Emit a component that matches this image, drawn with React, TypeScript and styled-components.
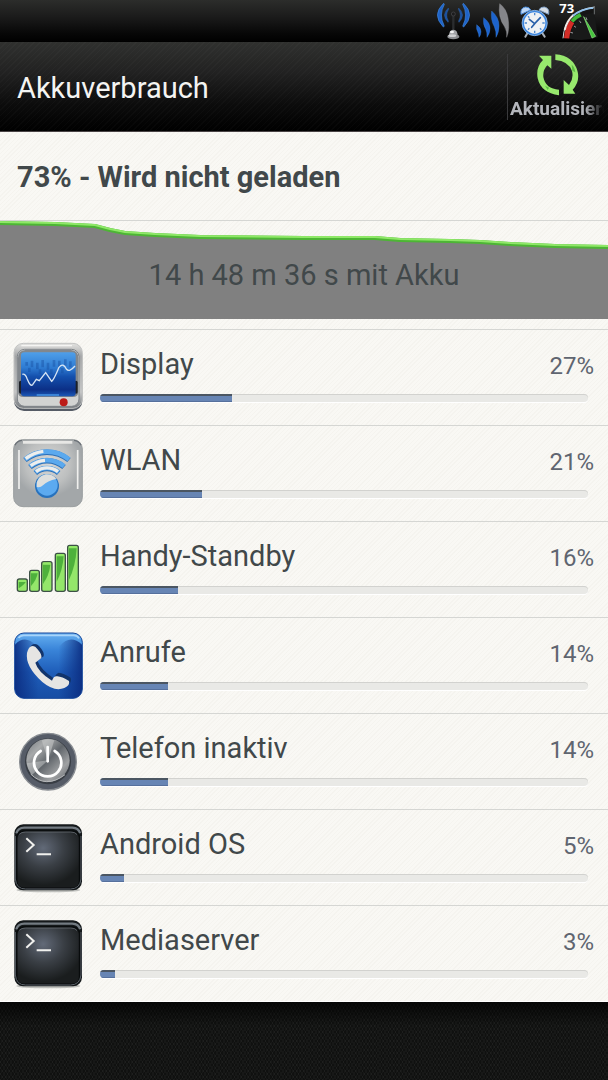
import React from "react";
import styled, { createGlobalStyle } from "styled-components";

const GlobalStyle = createGlobalStyle`
  *, *::before, *::after { box-sizing: border-box; }
  body {
    margin: 0;
    background: #0f0f0f;
    font-family: Roboto, "Liberation Sans", sans-serif;
  }
`;

const Screen = styled.div`
  display: flex;
  flex-direction: column;
  min-height: 100vh;
`;

const StatusBar = styled.div`
  display: flex;
  justify-content: flex-end;
  gap: 6px;
  height: 42px;
  padding-right: 9px;
  background: linear-gradient(#2c2d2b, #1b1b1b 40%, #070707 80%, #000);
`;

const StatusIcon = styled.svg`
  display: block;
  height: 42px;
`;

const Header = styled.header`
  display: flex;
  align-items: center;
  justify-content: space-between;
  height: 90px;
  padding-left: 17px;
  border-bottom: 1px solid #4a4446;
  background:
    repeating-linear-gradient(135deg, rgba(255, 255, 255, 0.02) 0 1px, transparent 1px 4px),
    linear-gradient(#30312f, #212121 35%, #0c0c0c 70%, #000);
`;

const Title = styled.h1`
  margin: 0;
  padding-top: 2px;
  font-size: 29px;
  line-height: 34px;
  font-weight: 400;
  color: #f4f4f2;
`;

const RefreshButton = styled.button`
  display: flex;
  flex-direction: column;
  align-items: center;
  justify-content: center;
  gap: 2px;
  width: 101px;
  height: 66px;
  margin: 0;
  padding: 0 2px;
  border: 0;
  border-left: 1px solid #3a3a3c;
  background: none;
  font-family: inherit;
  cursor: pointer;
`;

const RefreshIcon = styled.svg`
  flex: none;
  width: 42px;
  height: 42px;
`;

const RefreshLabel = styled.span`
  width: 100%;
  overflow: hidden;
  font-size: 19px;
  line-height: 22px;
  font-weight: 700;
  text-align: left;
  white-space: nowrap;
  color: #b4b6bc;
  mask-image: linear-gradient(90deg, #000 78%, transparent 98%);
`;

const Content = styled.main`
  border-bottom: 1px solid #ffffff;
  background:
    repeating-linear-gradient(135deg, rgba(120, 110, 80, 0.03) 0 1px, transparent 1px 3px),
    #f9f8f4;
`;

const Summary = styled.h2`
  display: flex;
  align-items: center;
  height: 88px;
  margin: 0;
  padding: 2px 0 0 17px;
  font-size: 29px;
  line-height: 34px;
  font-weight: 700;
  color: #41484a;
`;

const Chart = styled.section`
  display: grid;
  height: 99px;
  margin-bottom: 10px;
  border-top: 1px solid #d5d6d3;
`;

const ChartGraph = styled.svg`
  grid-area: 1 / 1;
  display: block;
  width: 100%;
  height: 98px;
  overflow: visible;
`;

const ChartLabel = styled.p`
  grid-area: 1 / 1;
  z-index: 1;
  align-self: center;
  margin: 0;
  padding-top: 10px;
  font-size: 29px;
  line-height: 34px;
  text-align: center;
  color: #41484a;
`;

const UsageList = styled.ul`
  margin: 0;
  padding: 0;
  list-style: none;
`;

const UsageRow = styled.li`
  display: grid;
  grid-template-columns: 72px 1fr;
  column-gap: 16px;
  align-items: start;
  height: 96px;
  padding: 12px 14px 0 12px;
  border-top: 1px solid #d5d6d3;
`;

const RowIcon = styled.svg`
  display: block;
  width: 72px;
  height: 72px;
`;

const RowBody = styled.div`
  padding-top: 5px;
`;

const RowText = styled.div`
  display: flex;
  align-items: baseline;
  justify-content: space-between;
  height: 34px;
  margin-bottom: 13px;
  line-height: 34px;
`;

const Name = styled.span`
  font-size: 29px;
  color: #41484a;
`;

const Percent = styled.span`
  font-size: 24px;
  color: #5f6570;
`;

const Track = styled.div`
  height: 8px;
  margin-right: 6px;
  overflow: hidden;
  border-radius: 4px;
  background: #e9e9e6;
  box-shadow: inset 0 1px 0 #d2d2cf, 0 1px 0 #ffffff;
`;

const Fill = styled.div`
  height: 100%;
  border-top: 2px solid #4b5662;
  border-bottom: 1px solid #56709c;
  background: #6785b4;
`;

const Footer = styled.footer`
  flex: 1;
  background:
    linear-gradient(rgba(0, 0, 0, 0.7), transparent 24px),
    repeating-linear-gradient(60deg, rgba(255, 255, 255, 0.03) 0 1px, transparent 1px 3px),
    repeating-linear-gradient(120deg, rgba(255, 255, 255, 0.03) 0 1px, transparent 1px 3px),
    #101110;
`;

const AntennaIcon = () => (
  <StatusIcon width="33" viewBox="27 0 99 126" aria-hidden="true">
    <g fill="#1f63c8" stroke="#3f86dd" strokeWidth="2">
      <path d="M47 10Q10 44 46 81Q50 80 48 76Q32 45 49 13Z" />
      <path d="M106 10Q143 44 107 81Q103 80 105 76Q121 45 104 13Z" />
    </g>
    <g fill="#1a4f9f" stroke="#3870b8" strokeWidth="1">
      <path d="M61 24Q38 44 60 67Q62 66 61 62Q51 45 62 28Z" />
      <path d="M92 24Q115 44 93 67Q91 66 92 62Q102 45 91 28Z" />
    </g>
    <path d="M76 46V94" stroke="#2b2d2f" strokeWidth="7" strokeLinecap="round" />
    <circle cx="76" cy="42" r="6" fill="#1c1c1d" stroke="#4c4c4e" strokeWidth="2" />
    <path d="M63 108Q63 89 76 89T89 108Z" fill="#a2a3a6" />
    <ellipse cx="72" cy="96" rx="6" ry="4" fill="#f2f2f2" />
    <ellipse cx="76" cy="110" rx="18" ry="8" fill="#8c8d90" />
    <ellipse cx="73" cy="107" rx="12" ry="4" fill="#d0d1d3" />
  </StatusIcon>
);

const SignalIcon = () => (
  <StatusIcon width="34" viewBox="144 0 102 126" aria-hidden="true">
    <g fill="#1d63cc" stroke="#4089e0" strokeWidth="1">
      <path d="M146 74Q159 82 159 95Q159 105 153 112Q153 102 149 95Q144 86 146 74Z" />
      <path d="M167 53Q186 67 186 85Q186 101 177 112Q178 98 173 87Q164 73 167 53Z" />
      <path d="M191 33Q213 52 213 77Q213 98 204 112Q205 93 199 80Q187 60 191 33Z" />
    </g>
    <path d="M215 11Q235 25 240 54Q246 88 236 112Q238 94 229 79Q209 51 215 11Z" fill="#85868a" stroke="#a0a1a4" strokeWidth="1" />
  </StatusIcon>
);

const AlarmIcon = () => (
  <StatusIcon width="35" viewBox="264 0 105 126" aria-hidden="true">
    <path d="M299 98L292 110M342 98L350 110" stroke="#a9b0b8" strokeWidth="6" strokeLinecap="round" />
    <path d="M279 43Q276 24 292 21Q304 20 308 30Z" fill="#bcd6f5" stroke="#4c8ddb" strokeWidth="3" />
    <path d="M362 43Q365 24 349 21Q337 20 333 30Z" fill="#d5dde6" stroke="#7f9fc5" strokeWidth="3" />
    <circle cx="320" cy="69" r="35" fill="#eef1f4" stroke="#3d86df" strokeWidth="6" />
    <circle cx="320" cy="69" r="38" fill="none" stroke="#a9cdf4" strokeWidth="2" />
    <path d="M320 39V46M320 92V99M290 69H297M343 69H350M300 49L304 53M340 89L336 85M300 89L304 85" stroke="#4e88cd" strokeWidth="4" />
    <path d="M304 58L320 71L337 53M320 71L311 82" fill="none" stroke="#285fa8" strokeWidth="5" strokeLinecap="round" />
  </StatusIcon>
);

const GaugeIcon = () => (
  <StatusIcon width="42" viewBox="387 0 126 126" role="img" aria-label="73">
    <path d="M425 116Q430 50 499 37L509 112Q468 126 425 116Z" fill="#181919" />
    <g fill="none">
      <path d="M405 115Q411 31 500 21" stroke="#d9dadc" strokeWidth="3" />
      <path d="M416 115Q418 85 432 65" stroke="#d42d27" strokeWidth="16" />
      <path d="M410 90Q416 62 437 44" stroke="#f1e9e6" strokeWidth="6" />
      <path d="M432 64Q444 50 462 42" stroke="#43b93a" strokeWidth="11" />
      <path d="M435 47Q460 27 496 24" stroke="#91c2ec" strokeWidth="6" />
      <path d="M458 44Q476 34 500 32" stroke="#151515" strokeWidth="11" />
      <path d="M499 19V43" stroke="#6d7072" strokeWidth="3" />
      <path d="M427 97L435 99M438 78L444 82M454 62L459 69M474 52L477 60" stroke="#97999b" strokeWidth="3" />
    </g>
    <path d="M467 50L503 109L492 114Z" fill="#45c43d" stroke="#93e284" strokeWidth="2" />
    <text x="394" y="39" fill="#ffffff" fontFamily="'Open Sans', sans-serif" fontSize="39" fontWeight="700">73</text>
  </StatusIcon>
);

const Refresh = () => (
  <RefreshIcon viewBox="326 163 126 126" aria-hidden="true">
    <g fill="#97e86d">
      <path d="M392 270Q352 268 345 232Q343 211 357 197L369 207L369 168L332 168L344 181Q322 202 328 236Q338 280 392 287Z" />
      <path d="M381 164L381 181Q420 184 431 214Q437 236 422 256L406 241L406 282L441 282L433 270Q455 247 448 216Q435 168 381 164Z" />
    </g>
    <path d="M430 195Q439 202 441 218L432 213ZM350 258L362 264L358 271Z" fill="#5dbb45" />
  </RefreshIcon>
);

const DisplayIcon = () => (
  <RowIcon viewBox="36 36 216 216" aria-hidden="true">
    <defs>
      <linearGradient id="monitorFrame" x2="0" y2="1">
        <stop offset="0" stopColor="#e4e4e2" />
        <stop offset="0.2" stopColor="#a4a6a7" />
        <stop offset="0.75" stopColor="#c4c5c5" />
        <stop offset="1" stopColor="#74787d" />
      </linearGradient>
      <linearGradient id="monitorScreen" x2="0" y2="1">
        <stop offset="0" stopColor="#4f9fe9" />
        <stop offset="0.35" stopColor="#2e7bd2" />
        <stop offset="0.55" stopColor="#1450ad" />
        <stop offset="0.85" stopColor="#0c2f86" />
        <stop offset="1" stopColor="#1c59b8" />
      </linearGradient>
    </defs>
    <rect x="42" y="46" width="205" height="197" rx="30" fill="#555b65" />
    <rect x="42" y="40" width="205" height="195" rx="28" fill="url(#monitorFrame)" stroke="#c3c4c3" strokeWidth="3" />
    <rect x="52" y="58" width="185" height="171" rx="22" fill="#d2d3d2" stroke="#7d8287" strokeWidth="3" />
    <path d="M54 85Q54 61 76 60H213Q235 61 235 85V185Q235 201 218 201H70Q54 201 54 185Z" fill="#82878c" />
    <path d="M62 157V186M228 157V186" stroke="#1d2127" strokeWidth="10" strokeLinecap="round" />
    <rect x="63" y="67" width="164" height="132" rx="10" fill="url(#monitorScreen)" />
    <path d="M80 107V96M96 112V92M112 118V98M128 112V90M144 119V98M162 110V90M178 116V92M196 107V88M211 112V94M88 126V113M120 132V118M154 132V118M187 130V114" stroke="#144b9d" strokeWidth="8" opacity="0.4" />
    <path d="M67 133Q76 129 82 148Q91 171 98 164L109 148L118 152L137 128L155 154Q161 151 177 112Q190 97 199 117Q208 128 225 108" fill="none" stroke="#d7e5f4" strokeWidth="4" />
    <path d="M110 195H177" stroke="#438dde" strokeWidth="5" />
    <circle cx="191" cy="217" r="12" fill="#bc1c18" />
    <path d="M64 47H216" stroke="#f5f5f3" strokeWidth="4" />
  </RowIcon>
);

const WifiIcon = () => (
  <RowIcon viewBox="36 324 216 216" aria-hidden="true">
    <defs>
      <radialGradient id="wifiPlate" cy="0.35">
        <stop offset="0" stopColor="#d8d8d6" />
        <stop offset="0.65" stopColor="#bdbfbf" />
        <stop offset="1" stopColor="#a3a7a9" />
      </radialGradient>
    </defs>
    <rect x="41" y="329" width="206" height="201" rx="28" fill="url(#wifiPlate)" stroke="#9b9fa1" strokeWidth="3" />
    <path d="M69 337H217" stroke="#e7e7e5" strokeWidth="8" />
    <path d="M57 360V477M233 360V477" stroke="#efefed" strokeWidth="5" />
    <path d="M45 346Q50 333 66 331M243 346Q238 333 222 331" fill="none" stroke="#6c7278" strokeWidth="4" />
    <g fill="none" stroke="#2b6eb6" strokeWidth="16">
      <path d="M75 390A105 105 0 0 1 207 390" />
      <path d="M90 411A79 79 0 0 1 192 411" />
      <path d="M106 429A54 54 0 0 1 176 429" />
    </g>
    <g fill="none" stroke="#5ba9ee" strokeWidth="14">
      <path d="M75 388A105 105 0 0 1 207 388" />
      <path d="M90 409A79 79 0 0 1 192 409" />
      <path d="M106 427A54 54 0 0 1 176 427" />
    </g>
    <g fill="none" stroke="#eeeeec" strokeWidth="10">
      <path d="M77 386A105 105 0 0 1 130 364" />
      <path d="M92 407A79 79 0 0 1 135 391" />
      <path d="M108 425A54 54 0 0 1 174 425" />
    </g>
    <circle cx="141" cy="468" r="36" fill="#2872bd" />
    <circle cx="141" cy="465" r="32" fill="#5caaf0" />
    <path d="M110 470Q107 440 137 433Q160 432 169 447Q142 452 129 466Q119 475 110 470Z" fill="#dedfdd" />
  </RowIcon>
);

const greenBars = [
  { x: 52, y: 177, width: 30 },
  { x: 89, y: 151, width: 29 },
  { x: 125, y: 125, width: 31 },
  { x: 166, y: 100, width: 30 },
  { x: 203, y: 76, width: 32 },
];

const BarsIcon = () => (
  <RowIcon viewBox="36 42 216 216" aria-hidden="true">
    {greenBars.map(({ x, y, width }) => (
      <g key={x}>
        <rect x={x} y={y} width={width} height={214 - y} rx="6" fill="#94e66a" stroke="#3d5146" strokeWidth="4" />
        <path d={`M${x + 4} ${y + 9}H${x + width - 5}Q${x + width - 8} ${y + (214 - y) * 0.45} ${x + 4} ${214 - (214 - y) * 0.25}Z`} fill="#4eb13c" />
        <path d={`M${x + 6} ${y + 5}H${x + width - 6}`} stroke="#91e968" strokeWidth="5" />
      </g>
    ))}
  </RowIcon>
);

const PhoneIcon = () => (
  <RowIcon viewBox="36 330 216 216" aria-hidden="true">
    <defs>
      <linearGradient id="phonePlate" x2="0" y2="1">
        <stop offset="0" stopColor="#66b0f1" />
        <stop offset="0.25" stopColor="#3a85d9" />
        <stop offset="0.6" stopColor="#1e5db9" />
        <stop offset="1" stopColor="#174da4" />
      </linearGradient>
      <linearGradient id="phoneShade">
        <stop offset="0" stopColor="#0b2c80" />
        <stop offset="0.35" stopColor="#0b2c80" stopOpacity="0" />
        <stop offset="0.65" stopColor="#0b2c80" stopOpacity="0" />
        <stop offset="1" stopColor="#0b2c80" />
      </linearGradient>
    </defs>
    <rect x="44" y="339" width="203" height="196" rx="28" fill="url(#phonePlate)" stroke="#16479a" strokeWidth="3" />
    <path d="M45 374Q75 342 109 377H180Q211 342 246 374V507Q243 533 219 534H72Q48 532 45 507Z" fill="url(#phoneShade)" opacity="0.9" />
    <path d="M56 354Q59 347 71 346H222Q233 347 237 355" fill="none" stroke="#a8d4fa" strokeWidth="5" />
    <path d="M94 377Q104 373 112 382Q130 402 126 413L107 426Q118 454 158 480Q160 466 171 462Q186 463 207 477Q211 491 198 500Q163 516 127 486Q75 439 81 397Q85 381 94 377Z" fill="#12346b" transform="translate(5 -4)" />
    <path d="M94 379Q104 375 112 387Q127 404 124 414L106 428Q114 456 156 482Q162 466 172 469Q186 470 207 483Q211 496 193 504Q163 516 127 486Q75 439 81 399Q85 382 94 379Z" fill="#e6e5e3" />
  </RowIcon>
);

const PowerIcon = () => (
  <RowIcon viewBox="36 48 216 216" aria-hidden="true">
    <defs>
      <linearGradient id="powerFace" x2="1" y2="1">
        <stop offset="0" stopColor="#70757a" />
        <stop offset="0.25" stopColor="#a7a9aa" />
        <stop offset="0.5" stopColor="#61666b" />
        <stop offset="0.75" stopColor="#9fa1a3" />
        <stop offset="1" stopColor="#5d6268" />
      </linearGradient>
    </defs>
    <circle cx="144" cy="155" r="85" fill="#565c67" stroke="#898d92" strokeWidth="4" />
    <circle cx="144" cy="154" r="69" fill="#383d44" />
    <circle cx="144" cy="151" r="65" fill="url(#powerFace)" />
    <path d="M144 151L125 91Q144 84 163 91Z" fill="#c9cacb" opacity="0.55" />
    <path d="M144 151L95 196Q83 178 80 160Z" fill="#d1d2d3" opacity="0.45" />
    <path d="M92 192Q137 237 195 194" fill="none" stroke="#b6b8ba" strokeWidth="3" />
    <g fill="none" stroke="#ffffff" strokeWidth="8" strokeLinecap="round">
      <path d="M122 123A41 41 0 1 0 164 123" />
      <path d="M143 111V154" />
    </g>
  </RowIcon>
);

const TerminalIcon = () => (
  <RowIcon viewBox="36 336 216 216" aria-hidden="true">
    <defs>
      <radialGradient id="terminalFace" cx="0.42" cy="0.3" r="0.65">
        <stop offset="0" stopColor="#626a78" />
        <stop offset="0.5" stopColor="#3a3f45" />
        <stop offset="1" stopColor="#1a1d1e" />
      </radialGradient>
    </defs>
    <ellipse cx="145" cy="540" rx="96" ry="7" fill="#bfc0bd" />
    <rect x="43" y="343" width="203" height="198" rx="27" fill="#15191b" />
    <path d="M49 370Q54 353 73 353H217Q236 354 240 370" fill="none" stroke="#737b82" strokeWidth="7" />
    <rect x="50" y="363" width="189" height="172" rx="21" fill="url(#terminalFace)" stroke="#080b0c" strokeWidth="5" />
    <path d="M46 378V507Q49 537 77 537H212Q240 536 243 507V378" fill="none" stroke="#5c636a" strokeWidth="3" />
    <path d="M58 373Q64 366 77 366H212Q226 366 231 374" fill="none" stroke="#737981" strokeWidth="2" />
    <path d="M79 385L101 405L79 425M110 433H153" fill="none" stroke="#f1f1ee" strokeWidth="6" />
  </RowIcon>
);

const usage = [
  { name: "Display", percent: 27, Icon: DisplayIcon },
  { name: "WLAN", percent: 21, Icon: WifiIcon },
  { name: "Handy-Standby", percent: 16, Icon: BarsIcon },
  { name: "Anrufe", percent: 14, Icon: PhoneIcon },
  { name: "Telefon inaktiv", percent: 14, Icon: PowerIcon },
  { name: "Android OS", percent: 5, Icon: TerminalIcon },
  { name: "Mediaserver", percent: 3, Icon: TerminalIcon },
];

const levelLine =
  "0,2 55,3 95,5 110,9 125,12 155,14 200,16 304,17 375,17 400,19 450,20 480,21 510,23 555,25 608,26";

export default function App() {
  return (
    <Screen>
      <GlobalStyle />
      <StatusBar>
        <AntennaIcon />
        <SignalIcon />
        <AlarmIcon />
        <GaugeIcon />
      </StatusBar>
      <Header>
        <Title>Akkuverbrauch</Title>
        <RefreshButton type="button">
          <Refresh />
          <RefreshLabel>Aktualisieren</RefreshLabel>
        </RefreshButton>
      </Header>
      <Content>
        <Summary>73% - Wird nicht geladen</Summary>
        <Chart>
          <ChartGraph viewBox="0 0 608 98" preserveAspectRatio="none" aria-hidden="true">
            <polygon points={`0,98 ${levelLine} 608,98`} fill="#808080" />
            <polyline points={levelLine} fill="none" stroke="#4db535" strokeWidth="4" />
            <polyline points={levelLine} fill="none" stroke="#8fe868" strokeWidth="2" transform="translate(0 -1)" />
          </ChartGraph>
          <ChartLabel>14 h 48 m 36 s mit Akku</ChartLabel>
        </Chart>
        <UsageList>
          {usage.map(({ name, percent, Icon }) => (
            <UsageRow key={name}>
              <Icon />
              <RowBody>
                <RowText>
                  <Name>{name}</Name>
                  <Percent>{percent}%</Percent>
                </RowText>
                <Track
                  role="progressbar"
                  aria-label={name}
                  aria-valuenow={percent}
                  aria-valuemin={0}
                  aria-valuemax={100}
                >
                  <Fill style={{ width: `${percent}%` }} />
                </Track>
              </RowBody>
            </UsageRow>
          ))}
        </UsageList>
      </Content>
      <Footer />
    </Screen>
  );
}
